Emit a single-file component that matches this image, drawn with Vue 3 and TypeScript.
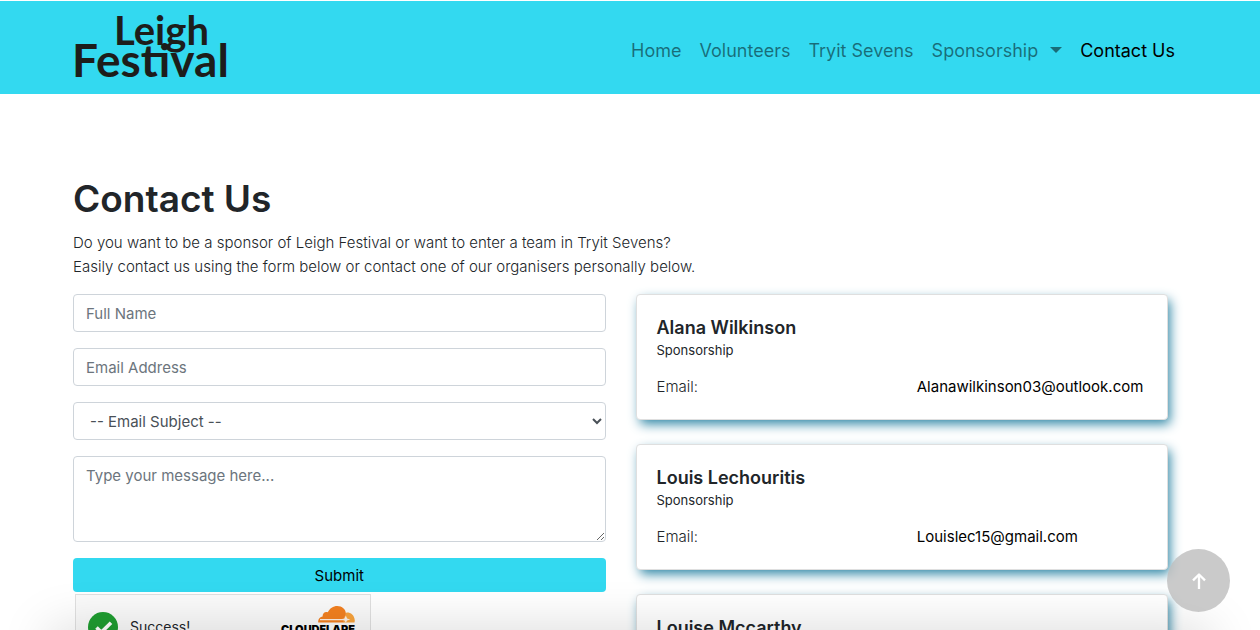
<script setup lang="ts">
import { ref } from 'vue'

interface NavLink {
  label: string
  active?: boolean
  dropdown?: boolean
}

interface Organiser {
  name: string
  role: string
  email: string
}

const links: NavLink[] = [
  { label: 'Home' },
  { label: 'Volunteers' },
  { label: 'Tryit Sevens' },
  { label: 'Sponsorship', dropdown: true },
  { label: 'Contact Us', active: true },
]

const organisers: Organiser[] = [
  { name: 'Alana Wilkinson', role: 'Sponsorship', email: 'Alanawilkinson03@outlook.com' },
  { name: 'Louis Lechouritis', role: 'Sponsorship', email: 'Louislec15@gmail.com' },
  { name: 'Louise Mccarthy', role: '', email: '' },
]

const fullName = ref('')
const email = ref('')
const subject = ref('')
const message = ref('')

function scrollToTop(): void {
  window.scrollTo({ top: 0, behavior: 'smooth' })
}
</script>

<template>
  <div class="page">
    <header class="navbar">
      <div class="navbar-inner">
        <a href="#" class="brand">
          <span class="brand-top">Leigh</span>
          <span class="brand-bottom">Festival</span>
        </a>
        <nav class="nav">
          <a
            v-for="link in links"
            :key="link.label"
            href="#"
            class="nav-link"
            :class="{ active: link.active, dropdown: link.dropdown }"
          >{{ link.label }}</a>
        </nav>
      </div>
    </header>

    <main class="main">
      <h1>Contact Us</h1>
      <p class="intro">
        Do you want to be a sponsor of Leigh Festival or want to enter a team in Tryit Sevens?<br>
        Easily contact us using the form below or contact one of our organisers personally below.
      </p>
      <div class="columns">
        <form class="form" @submit.prevent>
          <input v-model="fullName" class="control" type="text" placeholder="Full Name" aria-label="Full Name">
          <input v-model="email" class="control" type="email" placeholder="Email Address" aria-label="Email Address">
          <select v-model="subject" class="control select" aria-label="Email Subject">
            <option value="">-- Email Subject --</option>
          </select>
          <textarea v-model="message" class="control area" placeholder="Type your message here..." aria-label="Message"></textarea>
          <button class="submit" type="submit">Submit</button>
          <div class="turnstile">
            <svg class="tick" viewBox="0 0 30 30" aria-hidden="true">
              <circle cx="15" cy="15" r="15" fill="#1f9d31" />
              <path d="M8.5 15.5l4.8 4.8L23 10.8" fill="none" stroke="#fff" stroke-width="3.6" />
            </svg>
            <span class="success">Success!</span>
            <span class="cloudflare">
              <svg class="cloud" viewBox="0 0 37 17" aria-hidden="true">
                <path d="M25 16.5 27 9c.2-1.400.8-2.500 2-2.500 3.800 0 7.400 2.600 7.800 8l-.3 2z" fill="#f8a33c" />
                <path d="M.2 16.500C0 13.500 1.700 11 4.600 10.600 4.400 7.500 7 5.200 9.800 6.300 11.600 2.300 15.300 0 19.200 0c4.900 0 8.500 3.300 8.700 7.600L26 13l-.6 3.500z" fill="#f38020" />
                <path d="M2 13.100h22l2.500-.5 1.300-3 1.300 3 3.200.9-3.200.9-1.300 2.400-1.600-2.600H2z" fill="#fdf0e4" />
              </svg>
              <span class="cloudflare-name">CLOUDFLARE</span>
            </span>
          </div>
        </form>

        <div class="cards">
          <article v-for="person in organisers" :key="person.name" class="card">
            <h2>{{ person.name }}</h2>
            <small v-if="person.role">{{ person.role }}</small>
            <div v-if="person.email" class="contact">
              <span>Email:</span>
              <a :href="'mailto:' + person.email">{{ person.email }}</a>
            </div>
          </article>
        </div>
      </div>
    </main>

    <div class="bottom-shade"></div>
    <button class="to-top" type="button" aria-label="Back to top" @click="scrollToTop">
      <svg viewBox="0 0 16 18" aria-hidden="true">
        <path d="M8 17V3M2 8.300 8 2.500l6 5.800" fill="none" stroke="#fff" stroke-width="2.300" stroke-linejoin="round" />
      </svg>
    </button>
  </div>
</template>

<style>
html {
  scrollbar-width: none;
}

body {
  margin: 0;
  background: #fff;
}
</style>

<style scoped>
.page,
.page * {
  box-sizing: border-box;
}

.page {
  height: 100vh;
  overflow: hidden;
  padding-top: 1px;
  color: #212529;
  font-family: Inter, "Liberation Sans", sans-serif;
  font-size: 15px;
  font-weight: 300;
  line-height: 24px;
}

.navbar {
  background: #33d9f0;
}

.navbar-inner {
  display: flex;
  align-items: center;
  justify-content: space-between;
  max-width: 1140px;
  min-height: 93px;
  margin: 0 auto;
  padding: 0 25px 0 12px;
}

.brand {
  display: flex;
  flex-direction: column;
  width: 160px;
  padding-bottom: 6px;
  color: #1d1d1b;
  font-family: Lato, "Liberation Sans", sans-serif;
  font-weight: 700;
  line-height: 30px;
  text-decoration: none;
}

.brand-top {
  padding-left: 42px;
  font-size: 40px;
}

.brand-bottom {
  font-size: 46px;
}

.nav {
  display: flex;
  align-items: center;
  gap: 18px;
  padding-top: 6px;
}

.nav-link {
  color: rgba(0, 0, 0, 0.5);
  font-size: 18px;
  font-weight: 400;
  line-height: 30px;
  text-decoration: none;
}

.nav-link.active {
  color: #000;
}

.nav-link.dropdown::after {
  content: "";
  display: inline-block;
  margin-left: 12px;
  border: 6px solid transparent;
  border-top-color: currentColor;
  border-bottom: 0;
  vertical-align: 4px;
}

.main {
  max-width: 1114px;
  margin: 81px auto 0;
  padding-right: 19px;
}

h1 {
  margin: 0 0 8px;
  font-size: 37px;
  font-weight: 600;
  line-height: 48px;
}

.intro {
  margin: 0 0 15px;
}

.columns {
  display: grid;
  grid-template-columns: 1fr 1fr;
  gap: 30px;
  align-items: start;
}

.form {
  display: flex;
  flex-direction: column;
  gap: 16px;
}

.control {
  width: 100%;
  height: 38px;
  margin: 0;
  padding: 6px 12px;
  border: 1px solid #ced4da;
  border-radius: 4px;
  background: #fff;
  color: #495057;
  font-family: inherit;
  font-size: 15px;
  font-weight: 400;
  line-height: 24px;
}

.control::placeholder {
  color: #6c757d;
  opacity: 1;
}

.select {
  padding-right: 0;
}

.area {
  display: block;
  height: 86px;
  padding-top: 7px;
  resize: vertical;
}

.submit {
  height: 34px;
  padding: 0;
  border: 0;
  border-radius: 4px;
  background: #33d9f0;
  color: #000;
  font-family: inherit;
  font-size: 15px;
  font-weight: 400;
}

.turnstile {
  display: flex;
  align-items: center;
  width: 296px;
  height: 65px;
  margin: -14px 0 0 2px;
  padding: 0 15px 0 12px;
  border: 1px solid #e0e0e0;
  background: #fafafa;
}

.tick {
  width: 30px;
  height: 30px;
}

.success {
  margin-left: 12px;
  font-size: 14px;
  font-weight: 400;
}

.cloudflare {
  display: flex;
  flex-direction: column;
  align-items: flex-end;
  align-self: flex-start;
  margin-left: auto;
  padding-top: 11px;
}

.cloud {
  width: 37px;
  height: 17px;
}

.cloudflare-name {
  color: #000;
  font-size: 11px;
  font-weight: 900;
  line-height: 12px;
}

.cards {
  display: grid;
  gap: 24px;
}

.card {
  min-height: 125px;
  padding: 20px;
  border: 1px solid #dfdfdf;
  border-radius: 4px;
  background: #fff;
  box-shadow: 3px 5px 12px -1px #2e86a5;
}

h2 {
  margin: 0;
  font-size: 18px;
  font-weight: 600;
  line-height: 25px;
}

small {
  display: block;
  font-size: 13px;
  font-weight: 400;
  line-height: 20px;
}

.contact {
  display: grid;
  grid-template-columns: 1fr 1fr;
  gap: 30px;
  margin-top: 15px;
}

.contact a {
  color: #000;
  font-weight: 400;
  text-decoration: none;
}

.bottom-shade {
  position: fixed;
  top: 100%;
  right: 50px;
  left: 50px;
  height: 40px;
  box-shadow: 0 0 50px rgba(0, 0, 0, 0.17);
}

.to-top {
  position: fixed;
  right: 30px;
  bottom: 18px;
  display: grid;
  place-items: center;
  width: 63px;
  height: 63px;
  padding: 0;
  border: 0;
  border-radius: 50%;
  background: rgba(190, 190, 190, 0.82);
}

.to-top svg {
  width: 16px;
  height: 18px;
}
</style>
